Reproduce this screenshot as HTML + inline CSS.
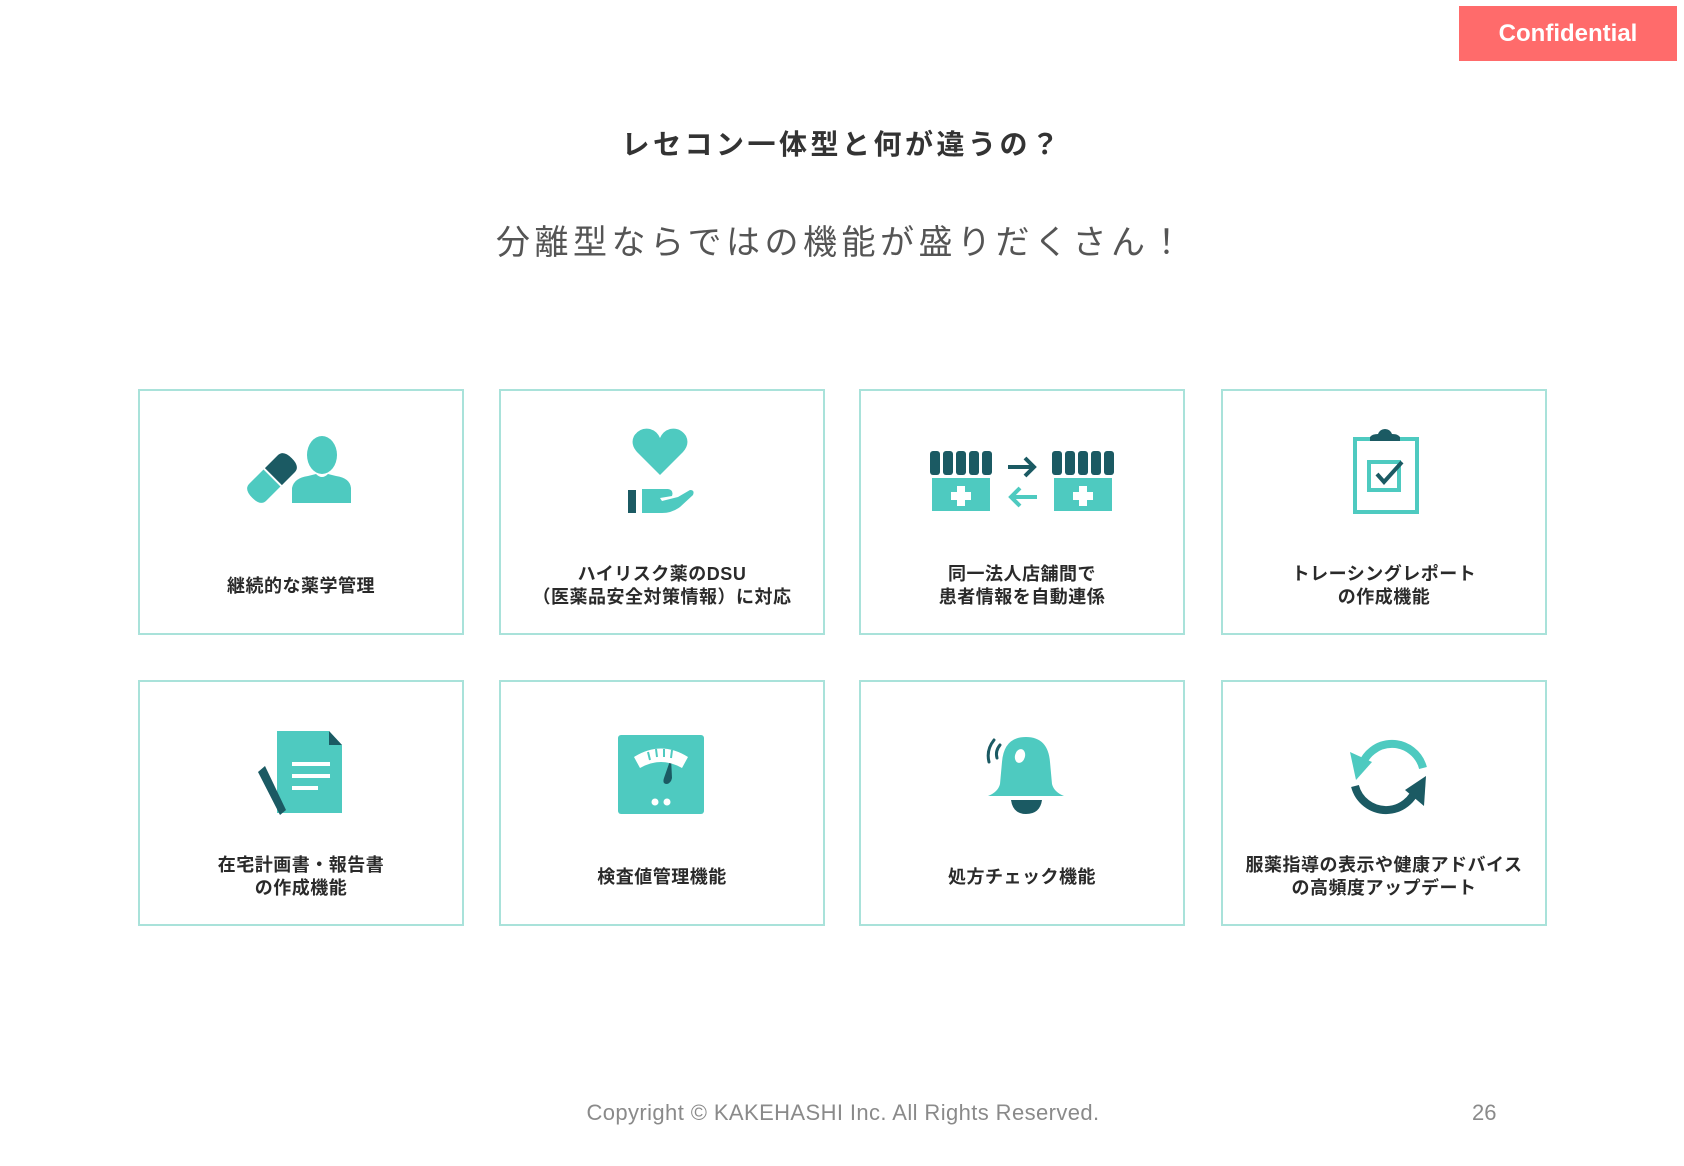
<!DOCTYPE html>
<html><head><meta charset="utf-8">
<style>
html,body{margin:0;padding:0;}
body{width:1684px;height:1166px;position:relative;background:#fff;overflow:hidden;font-family:"Liberation Sans","Noto Sans CJK JP",sans-serif;}
.conf{position:absolute;left:1459px;top:6px;width:218px;height:55px;background:#ff6b6b;color:#fff;font-weight:bold;font-size:24px;line-height:55px;text-align:center;}
.title{position:absolute;left:0;width:1684px;top:126px;text-align:center;font-size:28px;font-weight:bold;color:#333;letter-spacing:3.5px;line-height:38px;}
.sub{position:absolute;left:0;width:1684px;top:220px;text-align:center;font-size:34px;color:#555;letter-spacing:4.5px;line-height:46px;}
.card{position:absolute;width:326px;height:246px;border:2px solid #a9e2da;box-sizing:border-box;}
.txt{position:absolute;left:0;right:0;text-align:center;font-size:18px;font-weight:bold;color:#2a2a2a;line-height:23px;letter-spacing:0.5px;}
.copy{position:absolute;left:540px;top:1099px;width:606px;text-align:center;font-size:22px;color:#8a8a8a;line-height:28px;letter-spacing:0.4px;}
.pg{position:absolute;left:1472px;top:1099px;font-size:22px;color:#8a8a8a;line-height:28px;}
svg.ic{position:absolute;left:0;top:0;}
</style></head><body>
<div class="conf">Confidential</div>
<div class="title">レセコン一体型と何が違うの？</div>
<div class="sub">分離型ならではの機能が盛りだくさん！</div>

<div class="card" style="left:138px;top:389px"><div class="txt" style="top:184px">継続的な薬学管理</div></div>
<div class="card" style="left:499px;top:389px"><div class="txt" style="top:172px">ハイリスク薬のDSU<br>（医薬品安全対策情報）に対応</div></div>
<div class="card" style="left:859px;top:389px"><div class="txt" style="top:172px">同一法人店舗間で<br>患者情報を自動連係</div></div>
<div class="card" style="left:1221px;top:389px"><div class="txt" style="top:172px">トレーシングレポート<br>の作成機能</div></div>

<div class="card" style="left:138px;top:680px"><div class="txt" style="top:172px">在宅計画書・報告書<br>の作成機能</div></div>
<div class="card" style="left:499px;top:680px"><div class="txt" style="top:184px">検査値管理機能</div></div>
<div class="card" style="left:859px;top:680px"><div class="txt" style="top:184px">処方チェック機能</div></div>
<div class="card" style="left:1221px;top:680px"><div class="txt" style="top:172px">服薬指導の表示や健康アドバイス<br>の高頻度アップデート</div></div>

<svg class="ic" width="1684" height="1166" viewBox="0 0 1684 1166">
<g fill="#4ecac0">
 <ellipse cx="322" cy="455" rx="15" ry="19"/>
 <path d="M292 503 L292 488 Q294 478 308 476 L316 474 Q322 480 328 474 L336 476 Q350 478 351 488 L351 503 Z"/>
 <g transform="rotate(-45 272 478)">
  <path d="M252 466 L272 466 L272 490 L252 490 Q244 490 244 478 Q244 466 252 466 Z"/>
 </g>
 <path d="M660 475 L637 452 Q630 444 634 436 Q640 427 650 429 Q657 431 660 438 Q663 431 670 429 Q680 427 686 436 Q690 444 683 452 Z"/>
 <path d="M642 489 L668 489 Q674 490 672 496 L660 498 L662 501 L678 497 L690 490 Q695 490 693 495 L680 507 Q672 513 662 513 L642 513 Z"/>
 <rect x="932" y="478" width="58" height="33"/>
 <rect x="1054" y="478" width="58" height="33"/>
 <rect x="1355" y="439" width="62" height="73" fill="none" stroke="#4ecac0" stroke-width="4"/>
 <rect x="1369" y="462" width="30" height="28" fill="none" stroke="#4ecac0" stroke-width="4"/>
 <path d="M277 731 L329 731 L342 745 L342 813 L277 813 Z"/>
 <rect x="618" y="735" width="86" height="79" rx="3"/>
 <path d="M1026 737 Q1004 737 1002 762 L1000 784 Q998 792 988 796 L1064 796 Q1054 792 1052 784 L1050 762 Q1048 737 1026 737 Z"/>
 <path d="M1361 768 A32 32 0 0 1 1423 768" fill="none" stroke="#4ecac0" stroke-width="8"/>
 <path d="M1350 752 L1372 762 L1356 780 Z"/>
</g>
<g fill="#1b5a63">
 <g transform="rotate(-45 272 478)">
  <path d="M274 466 L292 466 Q300 466 300 478 Q300 490 292 490 L274 490 Z"/>
 </g>
 <rect x="628" y="490" width="8" height="23"/>
 <g>
  <rect x="930" y="451" width="10" height="24" rx="3"/><rect x="943" y="451" width="10" height="24" rx="3"/><rect x="956" y="451" width="10" height="24" rx="3"/><rect x="969" y="451" width="10" height="24" rx="3"/><rect x="982" y="451" width="10" height="24" rx="3"/>
  <rect x="1052" y="451" width="10" height="24" rx="3"/><rect x="1065" y="451" width="10" height="24" rx="3"/><rect x="1078" y="451" width="10" height="24" rx="3"/><rect x="1091" y="451" width="10" height="24" rx="3"/><rect x="1104" y="451" width="10" height="24" rx="3"/>
 </g>
 <path d="M1370 441 L1370 437 Q1372 434 1378 434 Q1380 429 1385 429 Q1390 429 1392 434 Q1398 434 1400 437 L1400 441 Z"/>
 <path d="M329 731 L342 745 L329 745 Z"/>
 <path d="M258 772 L265 766 L286 810 L280 815 Z"/>
 <path d="M671 758 L664 778 Q662 784 667 784 Q671 783 672 778 Z"/>
 <path d="M1011 800 L1042 800 Q1040 814 1026 814 Q1013 814 1011 800 Z"/>
 <path d="M994 740 Q986 750 989 762" fill="none" stroke="#1b5a63" stroke-width="3" stroke-linecap="round"/>
 <path d="M1000 745 Q995 751 997 758" fill="none" stroke="#1b5a63" stroke-width="3" stroke-linecap="round"/>
 <path d="M1355 786 A32 32 0 0 0 1417 786" fill="none" stroke="#1b5a63" stroke-width="8"/>
 <path d="M1426 776 L1424 806 L1405 790 Z"/>
</g>
<path d="M1008 467 L1034 467 M1025 458 L1034 467 L1025 476" fill="none" stroke="#1b5a63" stroke-width="4"/>
<path d="M1037 497 L1011 497 M1020 488 L1011 497 L1020 506" fill="none" stroke="#4ecac0" stroke-width="4"/>
<g fill="#fff">
 <rect x="957" y="486" width="8" height="20"/><rect x="951" y="492" width="20" height="8"/>
 <rect x="1079" y="486" width="8" height="20"/><rect x="1073" y="492" width="20" height="8"/>
 <rect x="292" y="762" width="38" height="4"/><rect x="292" y="774" width="38" height="4"/><rect x="292" y="786" width="26" height="4"/>
 <circle cx="655" cy="802" r="3.5"/><circle cx="667" cy="802" r="3.5"/>
 <ellipse cx="1020" cy="756" rx="5" ry="7" transform="rotate(15 1020 756)"/>
</g>
<path d="M634 757 Q661 740 688 757 L682 768 Q661 756 640 768 Z" fill="#fff"/>
<g stroke="#4ecac0" stroke-width="2"><line x1="648" y1="752" x2="650" y2="760"/><line x1="656" y1="749" x2="657" y2="757"/><line x1="664" y1="749" x2="664" y2="757"/><line x1="672" y1="750" x2="671" y2="758"/></g>
<path d="M1377 474 L1384 482 L1402 462" fill="none" stroke="#1b5a63" stroke-width="4"/>
</svg>

<div class="copy">Copyright © KAKEHASHI Inc. All Rights Reserved.</div>
<div class="pg">26</div>
</body></html>
